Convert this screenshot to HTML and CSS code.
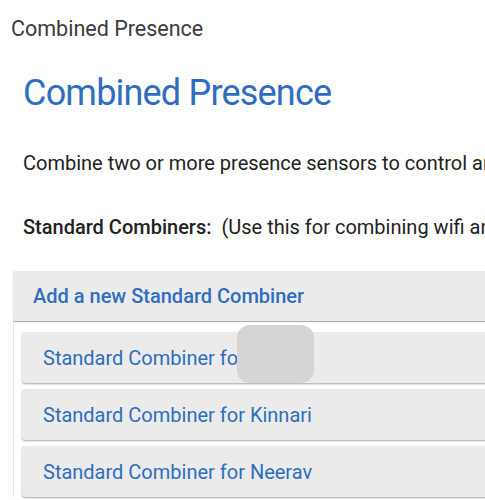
FILE: index.html
```html
<!DOCTYPE html>
<html>
<head>
<meta charset="utf-8">
<link rel="stylesheet" href="styles.css">
</head>
<body>
<div class="topbar">Combined Presence</div>
<main class="page">
  <h1 class="title">Combined Presence</h1>
  <p class="intro">Combine two or more presence sensors to control an virtual presence sensor.</p>
  <p class="section"><span class="label">Standard Combiners:</span>&nbsp; (Use this for combining wifi and other presence sensors)</p>
  <div class="add-box">Add a new Standard Combiner</div>
  <div class="list">
    <div class="item">Standard Combiner for <span class="redact"></span></div>
    <div class="item">Standard Combiner for Kinnari</div>
    <div class="item">Standard Combiner for Neerav</div>
  </div>
</main>
</body>
</html>
```
FILE: styles.css
```css
html, body {
  margin: 0;
  padding: 0;
  background: #fff;
  overflow: hidden;
  width: 485px;
  height: 500px;
}
body {
  font-family: Roboto, "Noto Sans", sans-serif;
  color: #222;
}
.topbar {
  font-size: 21.5px;
  color: #3c3c3c;
  padding: 15px 0 0 11px;
  height: 28px;
  line-height: 28px;
  white-space: nowrap;
}
.page {
  width: 700px;
}
.title {
  margin: 28px 0 0 23px;
  font-size: 36px;
  letter-spacing: -0.8px;
  font-weight: 400;
  color: #2e6dbf;
  line-height: 44px;
  white-space: nowrap;
}
.intro {
  margin: 36px 0 0 23px;
  font-size: 20px;
  line-height: 24px;
  color: #222;
  white-space: nowrap;
}
.section {
  margin: 40px 0 0 23px;
  font-size: 20px;
  line-height: 24px;
  color: #222;
  white-space: nowrap;
}
.label {
  font-weight: 500;
}
.add-box {
  margin: 32px 0 0 13px;
  background: #ebebeb;
  height: 50px;
  line-height: 50px;
  padding-left: 20px;
  font-size: 20px;
  font-weight: 500;
  color: #2e6dbf;
  box-shadow: 0 1px 1px rgba(0,0,0,0.35);
  border-radius: 2px 0 0 2px;
  white-space: nowrap;
}
.list {
  margin-left: 13px;
  border-left: 1px solid #e6e6e6;
  padding: 11px 0 0 8px;
  display: flex;
  flex-direction: column;
  gap: 6px;
}
.item {
  position: relative;
  background: #ebebeb;
  height: 51px;
  line-height: 53px;
  padding-left: 21px;
  font-size: 20px;
  color: #2e6dbf;
  box-shadow: 0 1px 2px rgba(0,0,0,0.35);
  border-radius: 3px 0 0 3px;
  white-space: nowrap;
}
.redact {
  position: absolute;
  left: 215px;
  top: -7px;
  width: 77px;
  height: 58px;
  background: #d5d5d5;
  border-radius: 13px;
}
```
